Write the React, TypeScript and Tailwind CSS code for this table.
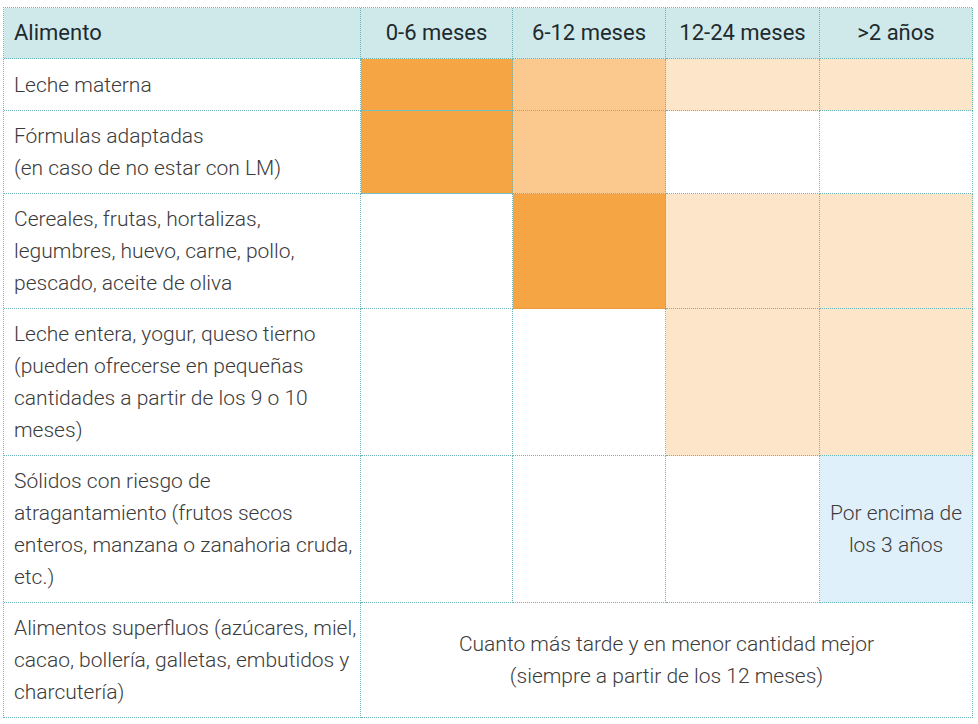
const DARK = "bg-[#f6a545]";
const MID = "bg-[#fbc88d]";
const LIGHT = "bg-[#fde5c9]";

type Row = {
  label: string[];
  cells: string[];
};

const rows: Row[] = [
  { label: ["Leche materna"], cells: [DARK, MID, LIGHT, LIGHT] },
  { label: ["Fórmulas adaptadas", "(en caso de no estar con LM)"], cells: [DARK, MID, "", ""] },
  {
    label: ["Cereales, frutas, hortalizas,", "legumbres, huevo, carne, pollo,", "pescado, aceite de oliva"],
    cells: ["", DARK, LIGHT, LIGHT],
  },
  {
    label: [
      "Leche entera, yogur, queso tierno",
      "(pueden ofrecerse en pequeñas",
      "cantidades a partir de los 9 o 10",
      "meses)",
    ],
    cells: ["", "", LIGHT, LIGHT],
  },
];

const cell = "border-r border-b border-dotted border-[#6bb4b8]";

export default function App() {
  return (
    <div
      className="w-[978px] h-[724px] bg-white pl-[3px] pt-[7px] text-[21px] leading-[32px] text-[#3b3b3b] font-light"
      style={{ fontFamily: "Roboto, 'Liberation Sans', sans-serif" }}
    >
      <div className="grid grid-cols-[357px_152px_153px_154px_153px] grid-rows-[51px_52px_83px_115px_147px_147px_115px] w-[969px] border-l border-t border-dotted border-[#6bb4b8]">
        {/* Header */}
        <div className={`${cell} bg-[#cfe9eb] flex items-center pl-[10px] text-[22px] font-normal text-[#1e2a2e]`}>Alimento</div>
        {["0-6 meses", "6-12 meses", "12-24 meses", ">2 años"].map((h) => (
          <div key={h} className={`${cell} bg-[#cfe9eb] flex items-center justify-center text-[22px] font-normal text-[#1e2a2e]`}>
            {h}
          </div>
        ))}

        {/* Rows */}
        {rows.map((r, i) => (
          <>
            <div key={`l${i}`} className={`${cell} flex flex-col justify-center pl-[10px]`}>
              {r.label.map((t) => (
                <span key={t}>{t}</span>
              ))}
            </div>
            {r.cells.map((c, j) => (
              <div key={`c${i}${j}`} className={`${cell} ${c}`} />
            ))}
          </>
        ))}

        {/* Sólidos */}
        <div className={`${cell} flex flex-col justify-center pl-[10px]`}>
          <span>Sólidos con riesgo de</span>
          <span>atragantamiento (frutos secos</span>
          <span>enteros, manzana o zanahoria cruda,</span>
          <span>etc.)</span>
        </div>
        <div className={cell} />
        <div className={cell} />
        <div className={cell} />
        <div className={`${cell} bg-[#e0f0fa] flex flex-col items-center justify-center text-center`}>
          <span>Por encima de</span>
          <span>los 3 años</span>
        </div>

        {/* Superfluos */}
        <div className={`${cell} flex flex-col justify-center pl-[10px]`}>
          <span>Alimentos superfluos (azúcares, miel,</span>
          <span>cacao, bollería, galletas, embutidos y</span>
          <span>charcutería)</span>
        </div>
        <div className={`${cell} col-span-4 flex flex-col items-center justify-center text-center`}>
          <span>Cuanto más tarde y en menor cantidad mejor</span>
          <span>(siempre a partir de los 12 meses)</span>
        </div>
      </div>
    </div>
  );
}
